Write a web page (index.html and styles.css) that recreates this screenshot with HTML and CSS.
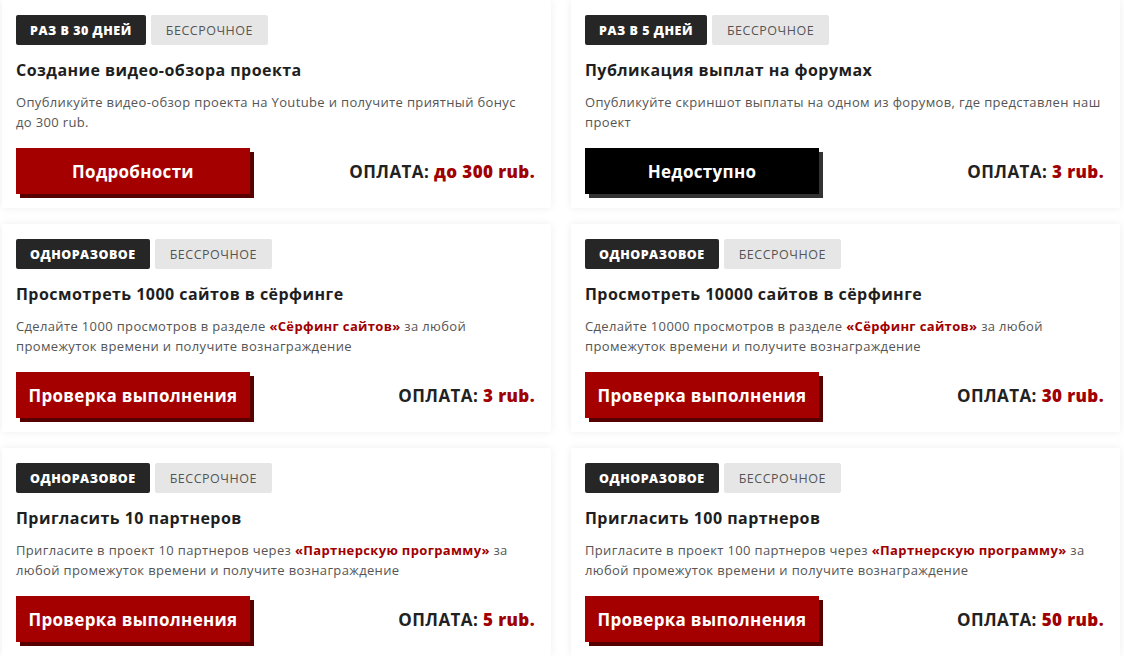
FILE: index.html
```html
<!DOCTYPE html>
<html lang="ru">
<head>
<meta charset="utf-8">
<link rel="stylesheet" href="styles.css">
</head>
<body>
<div class="grid">
  <div class="card">
    <div class="tags"><span class="tag dark">РАЗ В 30 ДНЕЙ</span><span class="tag light">БЕССРОЧНОЕ</span></div>
    <div class="title">Создание видео-обзора проекта</div>
    <div class="desc">Опубликуйте видео-обзор проекта на Youtube и получите приятный бонус до 300 rub.</div>
    <div class="foot"><span class="btn">Подробности</span><span class="pay">ОПЛАТА: <b>до 300 rub.</b></span></div>
  </div>
  <div class="card">
    <div class="tags"><span class="tag dark">РАЗ В 5 ДНЕЙ</span><span class="tag light">БЕССРОЧНОЕ</span></div>
    <div class="title">Публикация выплат на форумах</div>
    <div class="desc">Опубликуйте скриншот выплаты на одном из форумов, где представлен наш проект</div>
    <div class="foot"><span class="btn off">Недоступно</span><span class="pay">ОПЛАТА: <b>3 rub.</b></span></div>
  </div>
  <div class="card">
    <div class="tags"><span class="tag dark">ОДНОРАЗОВОЕ</span><span class="tag light">БЕССРОЧНОЕ</span></div>
    <div class="title">Просмотреть 1000 сайтов в сёрфинге</div>
    <div class="desc">Сделайте 1000 просмотров в разделе <a class="link">«Сёрфинг сайтов»</a> за любой промежуток времени и получите вознаграждение</div>
    <div class="foot"><span class="btn">Проверка выполнения</span><span class="pay">ОПЛАТА: <b>3 rub.</b></span></div>
  </div>
  <div class="card">
    <div class="tags"><span class="tag dark">ОДНОРАЗОВОЕ</span><span class="tag light">БЕССРОЧНОЕ</span></div>
    <div class="title">Просмотреть 10000 сайтов в сёрфинге</div>
    <div class="desc">Сделайте 10000 просмотров в разделе <a class="link">«Сёрфинг сайтов»</a> за любой промежуток времени и получите вознаграждение</div>
    <div class="foot"><span class="btn">Проверка выполнения</span><span class="pay">ОПЛАТА: <b>30 rub.</b></span></div>
  </div>
  <div class="card">
    <div class="tags"><span class="tag dark">ОДНОРАЗОВОЕ</span><span class="tag light">БЕССРОЧНОЕ</span></div>
    <div class="title">Пригласить 10 партнеров</div>
    <div class="desc">Пригласите в проект 10 партнеров через <a class="link">«Партнерскую программу»</a> за любой промежуток времени и получите вознаграждение</div>
    <div class="foot"><span class="btn">Проверка выполнения</span><span class="pay">ОПЛАТА: <b>5 rub.</b></span></div>
  </div>
  <div class="card">
    <div class="tags"><span class="tag dark">ОДНОРАЗОВОЕ</span><span class="tag light">БЕССРОЧНОЕ</span></div>
    <div class="title">Пригласить 100 партнеров</div>
    <div class="desc">Пригласите в проект 100 партнеров через <a class="link">«Партнерскую программу»</a> за любой промежуток времени и получите вознаграждение</div>
    <div class="foot"><span class="btn">Проверка выполнения</span><span class="pay">ОПЛАТА: <b>50 rub.</b></span></div>
  </div>
</div>
</body>
</html>
```
FILE: styles.css
```css
html, body {
  margin: 0;
  padding: 0;
  background: #fff;
  font-family: "Open Sans", "Noto Sans", sans-serif;
  color: #222;
}
.grid {
  display: grid;
  grid-template-columns: 549px 549px;
  column-gap: 20px;
  row-gap: 16px;
  padding: 0 2px;
}
.card {
  background: #fff;
  height: 208px;
  box-sizing: border-box;
  padding: 15px 16px 0 14px;
  box-shadow: 0 0 8px rgba(0, 0, 0, 0.07);
  display: flex;
  flex-direction: column;
}
.tags {
  display: flex;
  gap: 5px;
  height: 30px;
}
.tag {
  display: flex;
  align-items: center;
  padding: 0 14px;
  border-radius: 2px;
  font-size: 12.5px;
  letter-spacing: 0.5px;
}
.tag.dark {
  background: #262626;
  color: #fff;
  font-weight: 800;
}
.tag.light {
  background: #e6e6e6;
  color: #555;
  padding: 0 15px;
}
.title {
  margin-top: 14px;
  font-size: 16px;
  font-weight: 700;
  line-height: 22px;
  color: #1e1e1e;
  letter-spacing: 0.45px;
}
.desc {
  margin-top: 11px;
  font-size: 13px;
  line-height: 20px;
  color: #555;
  height: 40px;
  letter-spacing: 0.35px;
}
.link {
  color: #a00000;
  font-weight: 700;
}
.foot {
  margin-top: 16px;
  display: flex;
  align-items: center;
  justify-content: space-between;
}
.btn {
  width: 234px;
  height: 46px;
  display: flex;
  align-items: center;
  justify-content: center;
  background: #a50000;
  color: #fff;
  font-size: 17px;
  font-weight: 700;
  letter-spacing: 0.3px;
  box-shadow: 4px 4px 0 #560000;
}
.btn.off {
  background: #000;
  box-shadow: 4px 4px 0 #333;
}
.pay {
  font-size: 17px;
  font-weight: 700;
  color: #222;
  letter-spacing: 0.4px;
}
.pay b {
  color: #a00000;
}
```
